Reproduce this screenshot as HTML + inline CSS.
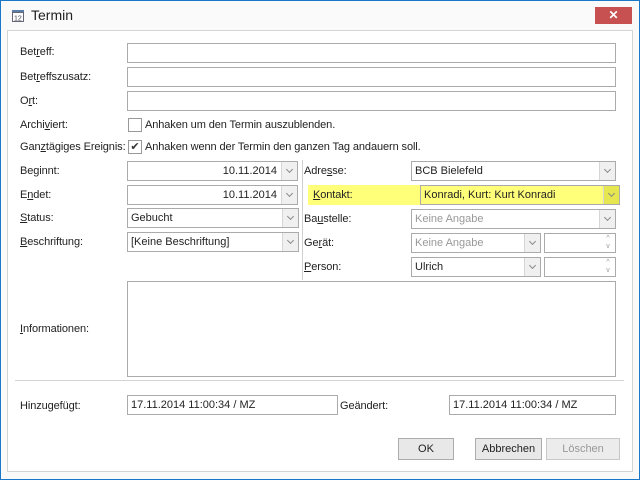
<!DOCTYPE html><html><head><meta charset="utf-8"><style>
*{box-sizing:border-box;margin:0;padding:0}
body{width:640px;height:480px;position:relative;background:#fafafa;font:11px "Liberation Sans",sans-serif;color:#222;overflow:hidden}
.a{position:absolute}
.win{left:0;top:0;width:640px;height:480px;border:1px solid #1b77c9}
.panel{left:7px;top:30px;width:626px;height:442px;border:1px solid #d4d4d4;background:#fff}
.l{position:absolute;left:20px;font-size:11px;white-space:nowrap;letter-spacing:-0.1px}
.i{position:absolute;border:1px solid #ababab;background:#fff;height:20px;font-size:11px;line-height:18px;padding-left:3px;white-space:nowrap;overflow:hidden}
.dd{position:absolute;right:0;top:0;width:16px;height:18px;background:#f0f0f0;border-left:1px solid #d6d6d6}
.dd:after{content:"";position:absolute;left:5px;top:5px;width:4px;height:4px;border-right:1.5px solid #888;border-bottom:1.5px solid #888;transform:rotate(45deg)}
.g{color:#999}
.cb{position:absolute;width:14px;height:14px;border:1px solid #999;background:#fff}
.btn{position:absolute;height:22px;border:1px solid #acacac;background:#e8e8e8;font-size:11px;text-align:center;line-height:20px}
u{text-decoration:underline}
.sp{position:absolute;right:0;top:0;width:14px;height:18px;color:#999;font-size:7px;line-height:8px;text-align:center;padding-top:1px}
</style></head><body>
<div class="a win"></div>
<svg class="a" style="left:11px;top:9px" width="14" height="14" viewBox="0 0 14 14"><rect x="1" y="1" width="12" height="3" fill="#5b7fa8"/><rect x="1.5" y="3.5" width="11" height="9" fill="#fff" stroke="#667"/><text x="3" y="11.5" font-size="7" font-family="Liberation Sans" fill="#445">12</text></svg>
<div class="a" style="left:31px;top:7px;font-size:14px;color:#222">Termin</div>
<div class="a" style="left:595px;top:7px;width:37px;height:17px;background:#c75050;color:#fff;text-align:center;font-size:12px;line-height:17px;font-weight:bold">✕</div>
<div class="a panel"></div>

<div class="l" style="top:46px">Bet<u>r</u>eff:</div>
<div class="i" style="left:127px;top:43px;width:489px"></div>
<div class="l" style="top:71px">Bet<u>r</u>effszusatz:</div>
<div class="i" style="left:127px;top:67px;width:489px"></div>
<div class="l" style="top:95px">O<u>r</u>t:</div>
<div class="i" style="left:127px;top:91px;width:489px"></div>
<div class="l" style="top:119px">Archi<u>v</u>iert:</div>
<div class="cb" style="left:128px;top:118px"></div>
<div class="l" style="left:145px;top:119px">Anhaken um den Termin auszublenden.</div>
<div class="l" style="top:141px">Gan<u>z</u>tägiges Ereignis:</div>
<div class="cb" style="left:128px;top:140px;font-size:11px;line-height:12px;text-align:center;color:#333">✔</div>
<div class="l" style="left:145px;top:141px">Anhaken wenn der Termin den ganzen Tag andauern soll.</div>

<div class="a" style="left:302px;top:160px;width:1px;height:120px;background:#d0d0d0"></div>

<div class="l" style="top:165px">Be<u>g</u>innt:</div>
<div class="i" style="left:127px;top:161px;width:171px;text-align:right;padding-right:20px">10.11.2014<div class="dd"></div></div>
<div class="l" style="top:189px">E<u>n</u>det:</div>
<div class="i" style="left:127px;top:185px;width:171px;text-align:right;padding-right:20px">10.11.2014<div class="dd"></div></div>
<div class="l" style="top:212px"><u>S</u>tatus:</div>
<div class="i" style="left:127px;top:208px;width:172px">Gebucht<div class="dd"></div></div>
<div class="l" style="top:236px"><u>B</u>eschriftung:</div>
<div class="i" style="left:127px;top:232px;width:172px">[Keine Beschriftung]<div class="dd"></div></div>

<div class="l" style="left:304px;top:165px">Adre<u>s</u>se:</div>
<div class="i" style="left:411px;top:161px;width:205px">BCB Bielefeld<div class="dd"></div></div>
<div class="a" style="left:308px;top:185px;width:312px;height:20px;background:#ffff7a"></div>
<div class="l" style="left:313px;top:189px"><u>K</u>ontakt:</div>
<div class="i" style="left:420px;top:185px;width:200px;background:#ffff7a;border-color:#aaa">Konradi, Kurt: Kurt Konradi<div class="dd" style="background:#e6e650"></div></div>
<div class="l" style="left:304px;top:213px">Ba<u>u</u>stelle:</div>
<div class="i g" style="left:411px;top:209px;width:205px">Keine Angabe<div class="dd"></div></div>
<div class="l" style="left:304px;top:237px">Ge<u>r</u>ät:</div>
<div class="i g" style="left:411px;top:233px;width:130px">Keine Angabe<div class="dd"></div></div>
<div class="i" style="left:544px;top:233px;width:72px"><div class="sp">^<br>v</div></div>
<div class="l" style="left:304px;top:261px"><u>P</u>erson:</div>
<div class="i" style="left:411px;top:257px;width:130px">Ulrich<div class="dd"></div></div>
<div class="i" style="left:544px;top:257px;width:72px"><div class="sp">^<br>v</div></div>

<div class="l" style="top:323px"><u>I</u>nformationen:</div>
<div class="i" style="left:127px;top:281px;width:489px;height:96px"></div>
<div class="a" style="left:15px;top:380px;width:609px;height:1px;background:#d4d4d4"></div>

<div class="l" style="top:400px">Hinzugefügt:</div>
<div class="i" style="left:127px;top:395px;width:211px">17.11.2014 11:00:34 / MZ</div>
<div class="l" style="left:340px;top:400px">Geändert:</div>
<div class="i" style="left:449px;top:395px;width:167px">17.11.2014 11:00:34 / MZ</div>

<div class="btn" style="left:398px;top:438px;width:56px">OK</div>
<div class="btn" style="left:475px;top:438px;width:67px">Abbrechen</div>
<div class="btn" style="left:546px;top:438px;width:74px;color:#999;background:#ececec;border-color:#c8c8c8">Löschen</div>
</body></html>
